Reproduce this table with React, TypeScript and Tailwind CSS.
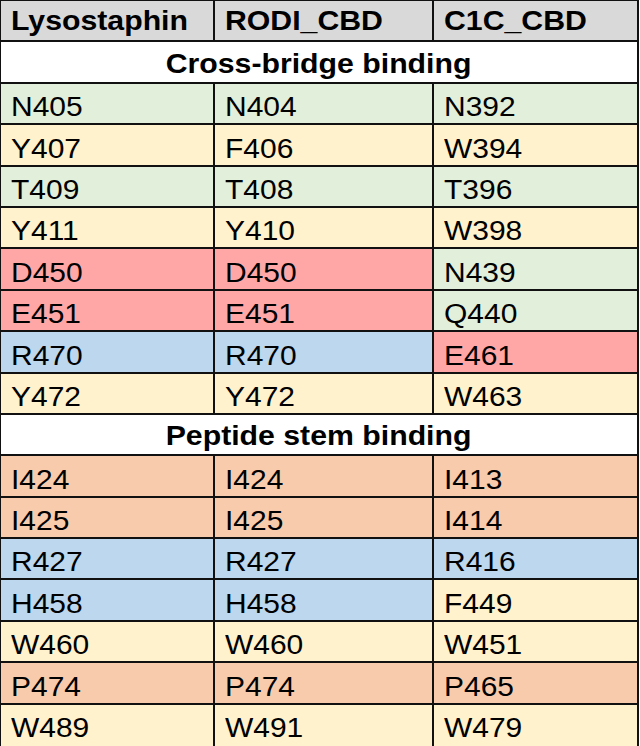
import React from "react";

type C = "g" | "y" | "r" | "b" | "o";
const bg: Record<C, string> = {
  g: "bg-[#e2efda]",
  y: "bg-[#fff2cc]",
  r: "bg-[#ffa7a7]",
  b: "bg-[#bdd7ee]",
  o: "bg-[#f8cbad]",
};

type Row = [string, C, string, C, string, C];

const cross: Row[] = [
  ["N405", "g", "N404", "g", "N392", "g"],
  ["Y407", "y", "F406", "y", "W394", "y"],
  ["T409", "g", "T408", "g", "T396", "g"],
  ["Y411", "y", "Y410", "y", "W398", "y"],
  ["D450", "r", "D450", "r", "N439", "g"],
  ["E451", "r", "E451", "r", "Q440", "g"],
  ["R470", "b", "R470", "b", "E461", "r"],
  ["Y472", "y", "Y472", "y", "W463", "y"],
];

const pep: Row[] = [
  ["I424", "o", "I424", "o", "I413", "o"],
  ["I425", "o", "I425", "o", "I414", "o"],
  ["R427", "b", "R427", "b", "R416", "b"],
  ["H458", "b", "H458", "b", "F449", "y"],
  ["W460", "y", "W460", "y", "W451", "y"],
  ["P474", "o", "P474", "o", "P465", "o"],
  ["W489", "y", "W491", "y", "W479", "y"],
];

function Cell({ text, c }: { text: string; c: C }) {
  return (
    <div className={`${bg[c]} flex items-start pl-[10px] pt-[10.4px] text-[27px] leading-none text-black`}>
      <span className="inline-block origin-left scale-x-[1.11]">{text}</span>
    </div>
  );
}

function Section({ title }: { title: string }) {
  return (
    <div className="col-span-3 bg-white flex items-start justify-center pt-[7.4px] text-[28px] font-bold leading-none text-black">
      <span className="inline-block scale-x-[1.08]">{title}</span>
    </div>
  );
}

export default function App() {
  const rows = (r: Row[]) =>
    r.map((row, i) => (
      <React.Fragment key={row[0] + i}>
        <Cell text={row[0]} c={row[1]} />
        <Cell text={row[2]} c={row[3]} />
        <Cell text={row[4]} c={row[5]} />
      </React.Fragment>
    ));
  return (
    <div className="w-[640px] h-[746px] overflow-hidden bg-white" style={{ fontFamily: '"Liberation Sans", Arial, sans-serif' }}>
      <div className="w-[639px] h-[760px] bg-[#111] pl-[1px] pr-[2px] pt-[1px] grid grid-cols-[212px_217px_203px] grid-rows-[repeat(17,39.4px)_1fr] gap-[2px]">
        {["Lysostaphin", "RODI_CBD", "C1C_CBD"].map((h) => (
          <div key={h} className="bg-[#d9d9d9] flex items-start pl-[10px] pt-[6.4px] text-[28px] font-bold leading-none text-black">
            <span className="inline-block origin-left scale-x-[1.08]">{h}</span>
          </div>
        ))}
        <Section title="Cross-bridge binding" />
        {rows(cross)}
        <Section title="Peptide stem binding" />
        {rows(pep)}
      </div>
    </div>
  );
}
